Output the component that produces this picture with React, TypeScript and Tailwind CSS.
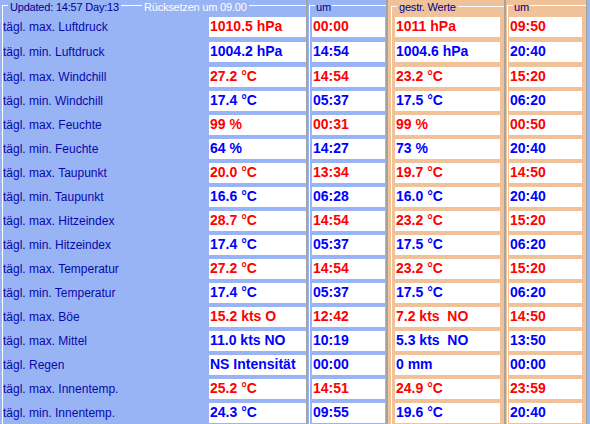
import React from "react";

type Row = { l: string; v: string; t: string; g: string; gt: string; red: boolean };

const rows: Row[] = [
  { l: "tägl. max. Luftdruck", v: "1010.5 hPa", t: "00:00", g: "1011 hPa", gt: "09:50", red: true },
  { l: "tägl. min. Luftdruck", v: "1004.2 hPa", t: "14:54", g: "1004.6 hPa", gt: "20:40", red: false },
  { l: "tägl. max. Windchill", v: "27.2 °C", t: "14:54", g: "23.2 °C", gt: "15:20", red: true },
  { l: "tägl. min. Windchill", v: "17.4 °C", t: "05:37", g: "17.5 °C", gt: "06:20", red: false },
  { l: "tägl. max. Feuchte", v: "99 %", t: "00:31", g: "99 %", gt: "00:50", red: true },
  { l: "tägl. min. Feuchte", v: "64 %", t: "14:27", g: "73 %", gt: "20:40", red: false },
  { l: "tägl. max. Taupunkt", v: "20.0 °C", t: "13:34", g: "19.7 °C", gt: "14:50", red: true },
  { l: "tägl. min. Taupunkt", v: "16.6 °C", t: "06:28", g: "16.0 °C", gt: "20:40", red: false },
  { l: "tägl. max. Hitzeindex", v: "28.7 °C", t: "14:54", g: "23.2 °C", gt: "15:20", red: true },
  { l: "tägl. min. Hitzeindex", v: "17.4 °C", t: "05:37", g: "17.5 °C", gt: "06:20", red: false },
  { l: "tägl. max. Temperatur", v: "27.2 °C", t: "14:54", g: "23.2 °C", gt: "15:20", red: true },
  { l: "tägl. min. Temperatur", v: "17.4 °C", t: "05:37", g: "17.5 °C", gt: "06:20", red: false },
  { l: "tägl. max. Böe", v: "15.2 kts O", t: "12:42", g: "7.2 kts  NO", gt: "14:50", red: true },
  { l: "tägl. max. Mittel", v: "11.0 kts NO", t: "10:19", g: "5.3 kts  NO", gt: "13:50", red: false },
  { l: "tägl. Regen", v: "NS Intensität", t: "00:00", g: "0 mm", gt: "00:00", red: false },
  { l: "tägl. max. Innentemp.", v: "25.2 °C", t: "14:51", g: "24.9 °C", gt: "23:59", red: true },
  { l: "tägl. min. Innentemp.", v: "24.3 °C", t: "09:55", g: "19.6 °C", gt: "20:40", red: false },
];

// rows 1 and 2 sit one pixel lower than the regular 24px pitch
const extra = (i: number) => (i === 1 || i === 2 ? " mt-[1px]" : "");

function Val({ text, red, w, i }: { text: string; red: boolean; w: string; i: number }) {
  return (
    <div
      className={
        "h-[20px] bg-white pl-[1px] text-[14px] font-bold leading-[18px] whitespace-pre overflow-hidden shrink-0 " +
        w +
        (red ? " text-[#ff0000]" : " text-[#0000ff]") +
        extra(i)
      }
    >
      {text}
    </div>
  );
}

function Splitter() {
  return <div className="w-[2px] shrink-0 bg-[#a4a4a4]" />;
}

export default function App() {
  return (
    <div className="w-[590px] h-[424px] overflow-hidden flex bg-[#99b4f4] font-['Liberation_Sans',Arial,sans-serif]">
      {/* Panel A */}
      <div className="w-[306px] shrink-0 pt-[5px] pl-[2px]">
        <div className="relative h-full border-t border-l border-white pt-[11px]">
          <span className="absolute top-[-6px] left-[5px] px-[2px] bg-[#99b4f4] text-[11px] leading-[14px] tracking-[-0.2px] text-[#00008c] whitespace-nowrap">
            Updated: 14:57 Day:13
          </span>
          <span className="absolute top-[-6px] left-[139px] px-[2px] bg-[#99b4f4] text-[11px] leading-[14px] tracking-[-0.2px] text-white whitespace-nowrap">
            Rücksetzen um 09.00
          </span>
          <div className="flex flex-col gap-[4px]">
            {rows.map((r, i) => (
              <div key={r.l} className={"flex items-center h-[20px]" + extra(i)}>
                <div className="w-[206px] text-[12px] leading-[14px] text-[#0808aa]">{r.l}</div>
                <Val text={r.v} red={r.red} w="w-[97px]" i={-1} />
              </div>
            ))}
          </div>
        </div>
      </div>
      <Splitter />
      {/* Panel B */}
      <div className="w-[78px] shrink-0 pt-[5px] pl-[1px]">
        <div className="relative h-full border-t border-l border-white pt-[11px] pl-[2px]">
          <span className="absolute top-[-6px] left-[5px] px-[1px] bg-[#99b4f4] text-[11px] leading-[14px] text-[#00008c]">
            um
          </span>
          <div className="flex flex-col gap-[4px]">
            {rows.map((r, i) => (
              <Val key={r.l} text={r.t} red={r.red} w="w-[73px]" i={i} />
            ))}
          </div>
        </div>
      </div>
      <Splitter />
      {/* Panel C */}
      <div className="w-[116px] shrink-0 bg-[#f0c29a] pt-[6px] pl-[3px]">
        <div className="relative h-full border-t border-l border-white pt-[10px] pl-[3px]">
          <span className="absolute top-[-7px] left-[5px] px-[2px] bg-[#f0c29a] text-[11px] leading-[14px] tracking-[-0.2px] text-[#00008c] whitespace-nowrap">
            gestr. Werte
          </span>
          <div className="flex flex-col gap-[4px]">
            {rows.map((r, i) => (
              <Val key={r.l} text={r.g} red={r.red} w="w-[105px]" i={i} />
            ))}
          </div>
        </div>
      </div>
      <Splitter />
      {/* Panel D */}
      <div className="w-[80px] shrink-0 bg-[#f0c29a] pt-[5px] pl-[1px]">
        <div className="relative h-full border-t border-l border-white pt-[11px] pl-[1px]">
          <span className="absolute top-[-6px] left-[5px] px-[1px] bg-[#f0c29a] text-[11px] leading-[14px] text-[#00008c]">
            um
          </span>
          <div className="flex flex-col gap-[4px]">
            {rows.map((r, i) => (
              <Val key={r.l} text={r.gt} red={r.red} w="w-[73px]" i={i} />
            ))}
          </div>
        </div>
      </div>
      <div className="w-[1px] shrink-0 bg-[#a4a4a4]" />
    </div>
  );
}
